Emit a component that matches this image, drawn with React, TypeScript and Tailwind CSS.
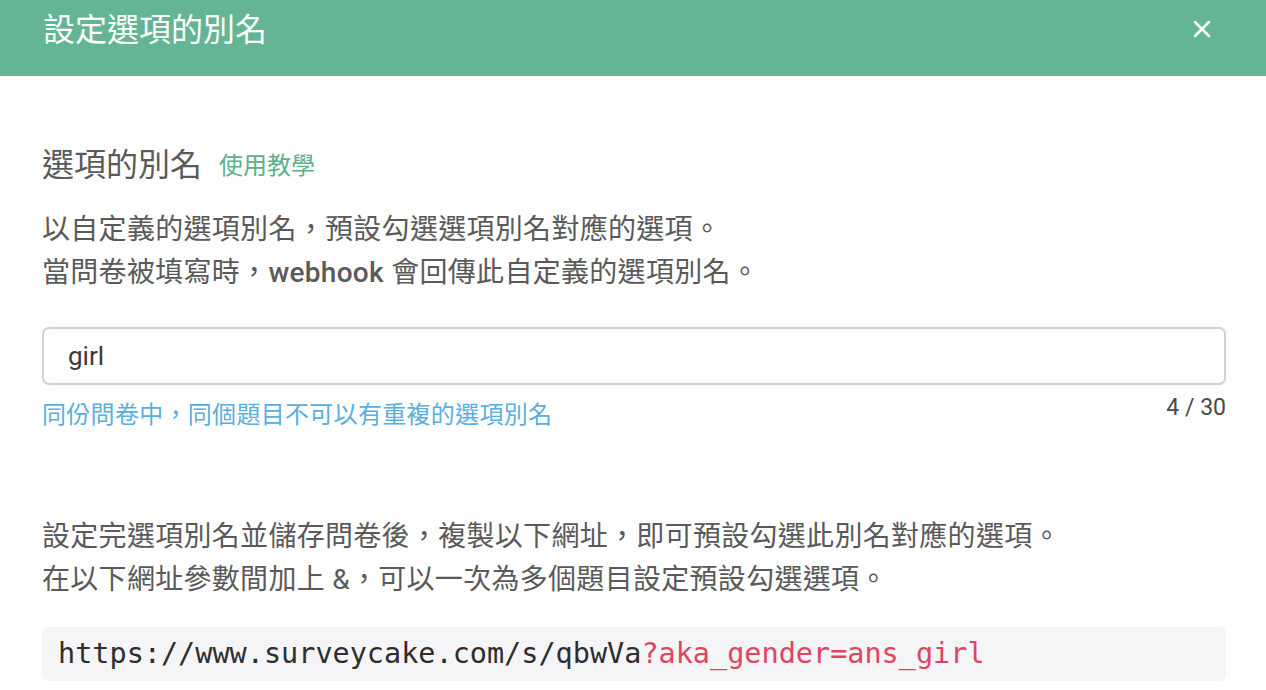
import { X } from 'lucide-react';

const sans = { fontFamily: 'Roboto, "Noto Sans CJK TC", sans-serif' };

export default function App() {
  return (
    <div className="w-[1266px] h-[690px] overflow-hidden bg-white" style={sans}>
      <header className="h-[76px] bg-[#63b595] flex items-start justify-between pl-[43px] pr-[50px]">
        <h1 className="text-[32px] leading-[40px] mt-[10px] text-white">設定選項的別名</h1>
        <button className="mt-[15px] text-white">
          <X size={28} strokeWidth={2.2} />
        </button>
      </header>

      <main className="pl-[42px] pr-[40px] pt-[67px]">
        <div className="h-[44px] flex items-center gap-[17px]">
          <h2 className="text-[32px] leading-[44px] text-[#5a5a5a]">選項的別名</h2>
          <a className="text-[24px] leading-[44px] mt-[2px] text-[#5bb08d]">使用教學</a>
        </div>

        <div className="mt-[21px] text-[28px] text-[#5a5a5a] tracking-[0.3px]">
          <div className="h-[43px] leading-[43px] overflow-hidden">以自定義的選項別名，預設勾選選項別名對應的選項。</div>
          <div className="h-[43px] leading-[43px] overflow-hidden">
            當問卷被填寫時，<span className="font-medium">webhook</span> 會回傳此自定義的選項別名。
          </div>
        </div>

        <div className="mt-[33px] h-[58px] rounded-[7px] border-2 border-[#d2d2d2] flex items-center px-[24px]">
          <span className="text-[26px] text-[#3a3a3a]">girl</span>
        </div>
        <div className="mt-[8px] flex justify-between items-start">
          <span className="h-[36px] text-[24px] leading-[36px] mt-[4px] text-[#5aaee0] tracking-[0.3px] overflow-hidden">同份問卷中，同個題目不可以有重複的選項別名</span>
          <span className="h-[30px] text-[23px] leading-[30px] text-[#4a4a4a]">4 / 30</span>
        </div>

        <div className="mt-[82px] text-[28px] text-[#5a5a5a] tracking-[0.3px]">
          <div className="h-[43px] leading-[43px] overflow-hidden">設定完選項別名並儲存問卷後，複製以下網址，即可預設勾選此別名對應的選項。</div>
          <div className="h-[43px] leading-[43px] overflow-hidden">在以下網址參數間加上 &amp;，可以一次為多個題目設定預設勾選選項。</div>
        </div>

        <div className="mt-[26px] h-[54px] rounded-[6px] bg-[#f5f4f7] flex items-center px-[16px]">
          <code className="text-[28.5px] text-[#2e2e2e]" style={{ fontFamily: '"DejaVu Sans Mono", monospace' }}>
            https://www.surveycake.com/s/qbwVa<span className="text-[#e0455f]">?aka_gender=ans_girl</span>
          </code>
        </div>
      </main>
    </div>
  );
}
